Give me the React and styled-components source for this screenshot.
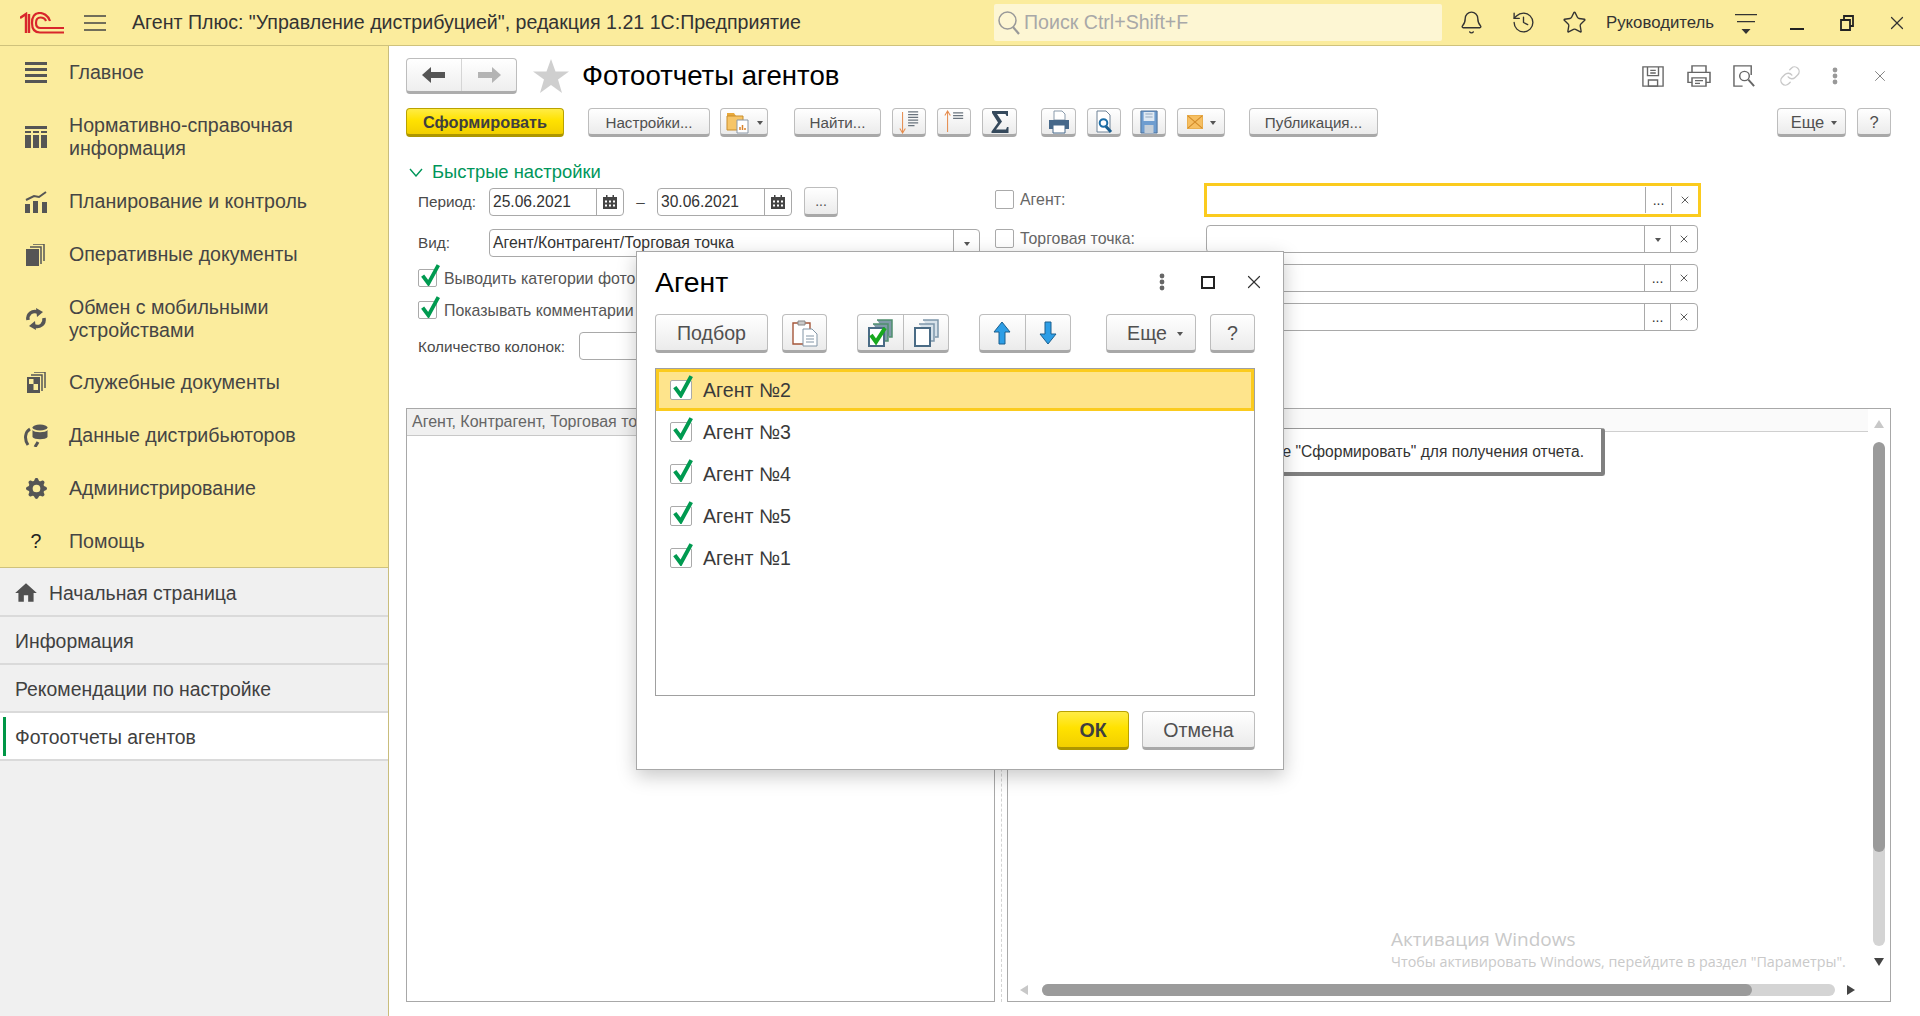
import React from "react";
import styled, { createGlobalStyle } from "styled-components";
import { Bell, History, Link, Star, X } from "lucide-react";
import { BsGearFill } from "react-icons/bs";
import { MdHome } from "react-icons/md";

const GlobalStyle = createGlobalStyle`
  html, body { margin: 0; padding: 0; background: #fff; }
  * { box-sizing: border-box; }
  body { font-family: "Liberation Sans", Arial, sans-serif; color: #444; }
`;

const Page = styled.div`
  position: relative;
  width: 1920px;
  height: 1016px;
  overflow: hidden;
  display: flex;
  flex-direction: column;
`;

/* top bar */
const TopBar = styled.header`
  height: 46px;
  flex: none;
  display: flex;
  align-items: center;
  background: #fbec9d;
  border-bottom: 1px solid #cfc27c;
  padding-left: 20px;
`;
const AppTitle = styled.div`
  flex: none;
  font-size: 19.6px;
  color: #333;
  margin-left: 26px;
  width: 862px;
  white-space: nowrap;
`;
const Search = styled.div`
  flex: none;
  width: 448px;
  height: 37px;
  background: #fdf6d3;
  border-radius: 2px;
  display: flex;
  align-items: center;
  padding-left: 3px;
  gap: 3px;
  font-size: 19.6px;
  color: #a8a8a8;
`;
const TopIcons = styled.div`
  display: flex;
  align-items: center;
  flex: none;
  color: #333;
`;
const TopSlot = styled.div`
  flex: none;
  width: ${(p) => p.$w}px;
  display: flex;
  justify-content: center;
  align-items: center;
`;
const RoleName = styled.div`
  flex: none;
  font-size: 16.8px;
  color: #333;
  width: 112px;
  margin-left: 4px;
  margin-right: 8px;
  white-space: nowrap;
`;

/* sidebar */
const Body = styled.div`
  flex: 1;
  display: flex;
  min-height: 0;
`;
const Sidebar = styled.aside`
  width: 389px;
  flex: none;
  display: flex;
  flex-direction: column;
  background: #f0f0f0;
  border-right: 1px solid #c9bd7c;
`;
const Sections = styled.nav`
  height: 522px;
  flex: none;
  background: #fbec9d;
  border-bottom: 1px solid #cfc27c;
`;
const SectionItem = styled.div`
  display: flex;
  align-items: center;
  height: ${(p) => p.$h}px;
  font-size: 19.6px;
  line-height: 23px;
  color: #454545;
`;
const SectionIcon = styled.div`
  width: 69px;
  flex: none;
  display: flex;
  justify-content: center;
  padding-left: 3px;
  color: #555;
`;
const HelpMark = styled.span`
  color: #222;
  font-size: 19.6px;
`;
const OpenTabs = styled.div`
  padding-top: 1px;
`;
const OpenTab = styled.div`
  position: relative;
  height: 48px;
  flex: none;
  display: flex;
  align-items: center;
  gap: 10px;
  padding: 2px 0 0 15px;
  font-size: 19.4px;
  color: #404040;
  background: ${(p) => (p.$active ? "#fff" : "transparent")};
  border-bottom: 2px solid #dadada;
`;
const ActiveMark = styled.span`
  position: absolute;
  left: 3px;
  top: 4px;
  bottom: 3px;
  width: 3px;
  background: #009646;
`;

/* main */
const Main = styled.main`
  flex: 1;
  min-width: 0;
  display: flex;
  flex-direction: column;
  padding: 12px 29px 14px 17px;
  background: #fff;
`;
const TitleRow = styled.div`
  height: 36px;
  flex: none;
  display: flex;
  align-items: center;
`;
const NavGroup = styled.div`
  width: 111px;
  height: 36px;
  display: flex;
  border: 1px solid #bdbdbd;
  border-bottom: 3px solid #adadad;
  border-radius: 4px;
  background: linear-gradient(#fff, #eee);
`;
const NavSeg = styled.div`
  flex: 1;
  display: flex;
  align-items: center;
  justify-content: center;
  & + & { border-left: 1px solid #d5d5d5; }
`;
const PageTitle = styled.h1`
  margin: 0 0 0 13px;
  font-size: 27.6px;
  font-weight: 400;
  color: #000;
  white-space: nowrap;
`;
const WinActions = styled.div`
  margin-left: auto;
  display: flex;
  align-items: center;
  margin-right: -12px;
`;
const WinSlot = styled.div`
  width: 45.4px;
  display: flex;
  justify-content: center;
`;

const Toolbar = styled.div`
  display: flex;
  height: ${(p) => p.$h || 29}px;
  margin-top: ${(p) => p.$mt || 0}px;
  flex: none;
`;
const Button = styled.button`
  width: ${(p) => p.$w}px;
  height: 100%;
  margin-left: ${(p) => p.$ml || 0}px;
  flex: none;
  display: flex;
  align-items: center;
  justify-content: center;
  gap: ${(p) => p.$gap || 0}px;
  padding: 1px 0 0 ${(p) => p.$pl || 0}px;
  font-family: inherit;
  font-size: ${(p) => p.$fs || 15.2}px;
  color: #505050;
  background: linear-gradient(#fff, #ebebeb);
  border: 1px solid #bdbdbd;
  border-bottom: 3px solid #a8a8a8;
  border-radius: 4px;
`;
const PrimaryButton = styled(Button)`
  color: #3f3f3f;
  font-weight: 700;
  background: linear-gradient(#ffec45, #ffe200 45%, #f2cf00);
  border: 1px solid #b9a200;
  border-bottom: 3px solid #ad9600;
`;
const SegButton = styled.div`
  width: ${(p) => p.$w}px;
  height: 100%;
  margin-left: ${(p) => p.$ml || 0}px;
  display: flex;
  background: linear-gradient(#fff, #ebebeb);
  border: 1px solid #bdbdbd;
  border-bottom: 3px solid #a8a8a8;
  border-radius: 4px;
`;
const Caret = styled.span`
  width: 0;
  height: 0;
  border-left: 3px solid transparent;
  border-right: 3px solid transparent;
  border-top: 4px solid #555;
  margin-top: ${(p) => p.$mt || 2}px;
`;
const Spacer = styled.div`
  margin-left: auto;
`;

/* quick settings */
const Quick = styled.section`
  display: flex;
  margin-top: 23px;
  flex: none;
`;
const QuickLeft = styled.div`
  width: 589px;
  flex: none;
`;
const QuickRight = styled.div`
  padding-top: 20px;
`;
const QuickHead = styled.div`
  height: 24px;
  display: flex;
  align-items: center;
  gap: 9px;
  padding-left: 3px;
  font-size: 18.4px;
  color: #00965a;
`;
const FormRow = styled.div`
  display: flex;
  align-items: center;
  height: ${(p) => p.$h}px;
  margin-top: ${(p) => p.$mt}px;
  padding-left: 12px;
  font-size: 15.3px;
  color: #4a4a4a;
`;
const RowLabel = styled.label`
  width: ${(p) => p.$w}px;
  flex: none;
  padding-top: ${(p) => p.$pt || 0}px;
  white-space: nowrap;
`;
const Field = styled.div`
  width: ${(p) => p.$w}px;
  height: 100%;
  flex: none;
  display: flex;
  align-items: center;
  border: 1px solid #a9a9a9;
  border-radius: 4px;
  background: #fff;
  font-size: ${(p) => p.$fs || 15.8}px;
  color: #333;
`;
const FieldText = styled.div`
  flex: 1;
  padding-left: 3px;
  white-space: nowrap;
  overflow: hidden;
`;
const FieldBtn = styled.div`
  width: ${(p) => p.$w}px;
  height: 100%;
  flex: none;
  display: flex;
  align-items: center;
  justify-content: center;
  border-left: 1px solid #a9a9a9;
  color: #333;
  font-size: 14px;
`;
const Dash = styled.span`
  width: 33px;
  text-align: center;
  color: #444;
`;
const MoreBtn = styled(Button)`
  height: 30px;
  margin-top: -1px;
  font-size: 14px;
`;
const CheckLabel = styled.span`
  margin: 1px 0 0 ${(p) => (p.$muted ? 6 : 7)}px;
  font-size: 15.9px;
  color: ${(p) => (p.$muted ? "#666" : "#555")};
  white-space: nowrap;
`;
const Box = styled.span`
  position: relative;
  display: block;
  flex: none;
  width: ${(p) => p.$w || 19}px;
  height: ${(p) => p.$h || 19}px;
  background: #fff;
  border: 1px solid #aaa;
  border-radius: 2px;
`;
const Tick = styled.svg`
  position: absolute;
  left: 2px;
  top: -6px;
`;
const FilterRow = styled.div`
  display: flex;
  align-items: center;
  height: 39px;
`;
const FilterLabel = styled.div`
  width: 209px;
  flex: none;
  display: flex;
  align-items: center;
`;
const FilterField = styled.div`
  margin-left: ${(p) => (p.$focus ? 0 : 2)}px;
  width: ${(p) => (p.$focus ? 497 : 492)}px;
  height: ${(p) => (p.$focus ? 34 : 28)}px;
  display: flex;
  align-items: center;
  justify-content: flex-end;
  background: #fff;
  border: ${(p) => (p.$focus ? "3px solid #fbcb1e" : "1px solid #a9a9a9")};
  border-radius: ${(p) => (p.$focus ? 0 : 4)}px;
`;
const FilterBtn = styled.div`
  width: ${(p) => p.$w}px;
  height: ${(p) => (p.$focus ? "26px" : "100%")};
  display: flex;
  align-items: center;
  justify-content: center;
  border-left: 1px solid #a9a9a9;
  font-size: 14px;
  color: #333;
`;

/* report area */
const Panels = styled.div`
  flex: 1;
  min-height: 0;
  display: flex;
  margin-top: 48px;
`;
const LeftPanel = styled.div`
  width: 589px;
  flex: none;
  border: 1px solid #a8a8a8;
`;
const LeftHead = styled.div`
  height: 27px;
  padding-left: 5px;
  display: flex;
  align-items: center;
  background: #f0f0f0;
  border-bottom: 1px solid #c8c8c8;
  font-size: 16px;
  color: #666;
  white-space: nowrap;
`;
const Splitter = styled.div`
  width: 12px;
  flex: none;
  display: flex;
  justify-content: center;
  &::before {
    content: "";
    border-left: 1px dashed #d4d4d4;
  }
`;
const RightPanel = styled.div`
  flex: 1;
  min-width: 0;
  display: flex;
  flex-direction: column;
  border: 1px solid #a8a8a8;
`;
const RightUpper = styled.div`
  flex: 1;
  min-height: 0;
  display: flex;
`;
const ReportArea = styled.div`
  flex: 1;
  position: relative;
`;
const ReportHead = styled.div`
  height: 23px;
  background: #fafafa;
  border-bottom: 1px solid #cfcfcf;
`;
const Hint = styled.div`
  position: absolute;
  left: 230px;
  top: 19px;
  width: 367px;
  height: 48px;
  display: flex;
  align-items: center;
  justify-content: flex-end;
  padding: 2px 17px 0 0;
  white-space: nowrap;
  font-size: 15.6px;
  color: #333;
  background: #fff;
  border: 1px solid #999;
  border-bottom: 4px solid #808080;
  border-right: 4px solid #808080;
  border-radius: 3px;
`;
const VBar = styled.div`
  width: 22px;
  flex: none;
  display: flex;
  flex-direction: column;
  align-items: center;
`;
const VTrack = styled.div`
  width: 12px;
  height: 504px;
  margin: 14px 0 12px;
  border-radius: 6px;
  background: #d4d4d4;
  overflow: hidden;
`;
const VThumb = styled.div`
  height: 410px;
  border-radius: 6px;
  background: #9b9b9b;
`;
const HBar = styled.div`
  height: 12px;
  flex: none;
  margin-bottom: 5px;
  display: flex;
  align-items: center;
  padding-left: 12px;
`;
const HTrack = styled.div`
  width: 793px;
  height: 12px;
  margin: 0 12px 0 14px;
  border-radius: 6px;
  background: #d4d4d4;
`;
const HThumb = styled.div`
  width: 710px;
  height: 12px;
  border-radius: 6px;
  background: #9b9b9b;
`;
const Activation = styled.div`
  position: absolute;
  left: 1391px;
  top: 926px;
  font-family: "Open Sans", sans-serif;
  color: #c9c9c9;
  pointer-events: none;
`;
const ActivationTitle = styled.div`
  font-size: 19px;
  line-height: 26px;
`;
const ActivationText = styled.div`
  font-size: 14.3px;
  line-height: 20px;
  white-space: nowrap;
`;

/* dialog */
const Dialog = styled.div`
  position: absolute;
  left: 636px;
  top: 251px;
  width: 648px;
  height: 519px;
  padding: 0 28px 0 18px;
  background: #fff;
  border: 1px solid #a8a8a8;
  box-shadow: 0 6px 18px rgba(0, 0, 0, 0.22);
`;
const DialogHead = styled.div`
  height: 62px;
  display: flex;
  align-items: center;
  padding-bottom: 2px;
  margin-right: -22px;
`;
const DialogTitle = styled.div`
  font-size: 28.4px;
  color: #000;
  flex: 1;
`;
const HeadTool = styled.div`
  width: 46px;
  display: flex;
  justify-content: center;
  color: #333;
`;
const AgentList = styled.div`
  height: 328px;
  margin-top: 15px;
  border: 1px solid #a0a0a0;
`;
const AgentRow = styled.div`
  height: 42px;
  display: flex;
  align-items: center;
  padding-left: ${(p) => (p.$current ? 11 : 14)}px;
  gap: 11px;
  font-size: 19.6px;
  color: #3a3a3a;
  background: ${(p) => (p.$current ? "#fee48c" : "#fff")};
  border: ${(p) => (p.$current ? "3px solid #fbcb1e" : "none")};
`;
const DialogFoot = styled.div`
  display: flex;
  justify-content: flex-end;
  gap: 13px;
  height: 39px;
  margin-top: 15px;
`;

/* icons */
const Logo = () => (
  <svg width="44" height="22" viewBox="0 0 44 22" fill="none" stroke="#d8262c" strokeWidth="2.2" style={{ flex: "none" }}>
    <path d="M0 6 L6 2 V21 M9 2 V21" strokeWidth="2.4" />
    <path d="M30 9 C28 3 23 1 20 1 C14 1 12 5 12 11 C12 17 15 20.500 20 20.500 H44" />
    <path d="M26 9 C25 6.500 23 5.500 20.500 5.500 C17 5.500 16 8 16 11 C16 14 17.500 16 20.500 16 H44" />
  </svg>
);
const Burger = () => (
  <svg width="22" height="16" viewBox="0 0 22 16" stroke="#444" strokeWidth="1.4" style={{ marginLeft: 20, flex: "none" }}>
    <path d="M0 1 H22 M0 8 H22 M0 15 H22" />
  </svg>
);
const SearchGlass = () => (
  <svg width="24" height="26" viewBox="0 0 24 26" fill="none" stroke="#999" strokeWidth="1.5">
    <circle cx="10.500" cy="10.500" r="8.500" />
    <path d="M16 17 L22 24" strokeWidth="2.200" />
  </svg>
);
const MenuIco = () => (
  <svg width="22" height="21" viewBox="0 0 22 21" fill="#555">
    <path d="M0 0 H22 V3 H0Z M0 6 H22 V9 H0Z M0 12 H22 V15 H0Z M0 18 H22 V21 H0Z" />
  </svg>
);
const TableIco = () => (
  <svg width="22" height="22" viewBox="0 0 22 22" fill="#555">
    <path d="M0 0 H22 V3 H0Z M0 5 H6 V7 H0Z M8 5 H14 V7 H8Z M16 5 H22 V7 H16Z M0 9 H6 V22 H0Z M8 9 H14 V22 H8Z M16 9 H22 V22 H16Z" />
  </svg>
);
const ChartIco = () => (
  <svg width="22" height="22" viewBox="0 0 22 22" fill="#555">
    <path d="M0 13 H5 V22 H0Z M8 10 H13 V22 H8Z M17 11 H22 V22 H17Z" />
    <path d="M1 9 L9 5 L14 6 L21 1" fill="none" stroke="#555" strokeWidth="2" />
  </svg>
);
const DocsIco = () => (
  <svg width="20" height="22" viewBox="0 0 20 22" fill="#555">
    <path d="M0 5 H13 V22 H0Z" />
    <path d="M15 20 V3 H4 M18 17 V0 H7" fill="none" stroke="#555" strokeWidth="1.500" />
  </svg>
);
const SyncIco = () => (
  <svg width="22" height="22" viewBox="0 0 22 22" fill="none" stroke="#555" strokeWidth="3.500">
    <path d="M3 12 C2 6 7 2 13 4" />
    <path d="M19 10 C20 16 15 20 9 18" />
    <path d="M11 0 L18 4 L12 9Z M11 22 L4 18 L10 13Z" fill="#555" stroke="none" />
  </svg>
);
const ServiceIco = () => (
  <svg width="19" height="21" viewBox="0 0 19 21" fill="#555">
    <path d="M0 5 H13 V21 H0Z" />
    <path d="M2 7 H6.500 V12 H2Z M6.500 12 H11 V18 H6.500Z" fill="#fbec9d" />
    <path d="M15 19 V3 H4 M18 16 V0 H7" fill="none" stroke="#555" strokeWidth="1.500" />
  </svg>
);
const DataIco = () => (
  <svg width="24" height="23" viewBox="0 0 24 23" fill="none" stroke="#555" strokeWidth="3">
    <ellipse cx="16" cy="3.500" rx="7.500" ry="3" fill="#555" stroke="none" />
    <path d="M8.500 6 V13 C10 16 22 16 23.500 13 V6 C22 9 10 9 8.500 6Z" fill="#555" stroke="none" />
    <path d="M6 5 C1 8 0 15 4 21" />
    <path d="M14 18 L11 23" />
  </svg>
);
const FilterIco = () => (
  <svg width="24" height="24" viewBox="0 0 24 24" fill="#333">
    <path d="M1 3 H23 V4.300 H1Z M3 10 H21 V11.300 H3Z" />
    <path d="M7.500 18 H16.500 L12 23Z" />
  </svg>
);
const ArrowNav = ({ color, right }) => (
  <svg width="24" height="16" viewBox="0 0 24 16" fill={color} style={right ? { transform: "scaleX(-1)" } : undefined}>
    <path d="M0 8 L9 0 V5 H23 V11 H9 V16Z" />
  </svg>
);
const TitleStar = () => (
  <svg width="36" height="34" viewBox="0 0 36 34" fill="#cfcfcf" style={{ marginLeft: 16 }}>
    <path d="M18 0 L22.500 12.500 H36 L25 20.500 L29 34 L18 26 L7 34 L11 20.500 L0 12.500 H13.500Z" />
  </svg>
);
const FolderIco = () => (
  <svg width="26" height="24" viewBox="0 0 26 24">
    <path d="M1 6 V3 H8 L10 6 H17 V11 H1Z" fill="#e8a93c" />
    <path d="M1 6 H17 V20 H1Z" fill="#f6c568" stroke="#c98d2a" />
    <path d="M11 10 H22 V23 H11Z" fill="#fff" stroke="#8a97a5" />
    <path d="M14 20 V17 M16.500 20 V15 M19 20 V18" stroke="#d9822b" strokeWidth="1.500" />
  </svg>
);
const SortIco = ({ up }) => (
  <svg width="22" height="24" viewBox="0 0 24 26" fill="none">
    <path d={up ? "M5 24 V2 M2 6 L5 1 L8 6" : "M5 2 V24 M2 20 L5 25 L8 20"} stroke="#e58a4a" strokeWidth="1.100" />
    <path d={up ? "M11 3 H22 M11 6 H22 M11 9 H22" : "M11 2 H22 M11 5 H22 M11 8 H22 M11 11 H22 M11 14 H22 M11 17 H18"} stroke="#6a747e" strokeWidth="1.200" />
  </svg>
);
const SigmaIco = () => (
  <svg width="18" height="22" viewBox="0 0 18 22" fill="#35495c">
    <path d="M1 0 H17 V5 H15.500 L14.500 3 H6 L11 10.500 L5 18.500 H15 L16 16 H17.500 V22 H0.500 V20.500 L7 11.500 L1 2Z" />
  </svg>
);
const PrintIco = () => (
  <svg width="22" height="24" viewBox="0 0 22 24">
    <path d="M6 1 H14 L17 4 V10 H6Z" fill="#fff" stroke="#8a9bac" />
    <path d="M1 10 H21 V19 H1Z" fill="#46688a" />
    <path d="M5 15 H17 V23 H5Z" fill="#fff" stroke="#46688a" />
  </svg>
);
const PreviewIco = () => (
  <svg width="20" height="25" viewBox="0 0 20 25" fill="none">
    <path d="M3 1 H12 L16 5 V22 H3Z" fill="#fff" stroke="#6f8296" />
    <circle cx="9.500" cy="13" r="3.800" stroke="#1b6ea8" strokeWidth="2" />
    <path d="M12 16.500 L17 22" stroke="#1b5f8f" strokeWidth="3" />
  </svg>
);
const SaveIco = () => (
  <svg width="18" height="24" viewBox="0 0 20 24" preserveAspectRatio="none">
    <path d="M1 1 H19 V23 H1Z" fill="#6e9dd0" stroke="#4c7199" />
    <path d="M4 2 H16 V11 H4Z" fill="#dfe9f3" />
    <path d="M5 15 H15 V23 H5Z" fill="#c6cfd8" />
    <path d="M6 4 H14 M6 7 H14" stroke="#90a5ba" />
  </svg>
);
const MailIco = () => (
  <svg width="16" height="14" viewBox="0 0 18 16" preserveAspectRatio="none">
    <path d="M0 0 H18 V16 H0Z" fill="#f6bf62" stroke="#dc9c36" />
    <path d="M1 1 L17 15 M17 1 L1 15" stroke="#d28b2a" strokeWidth="1.200" />
  </svg>
);
const OutlineDisk = () => (
  <svg width="22" height="21" viewBox="0 0 24 24" preserveAspectRatio="none" fill="none" stroke="#666" strokeWidth="1.500">
    <path d="M1 1 H23 V23 H1Z" />
    <path d="M6 1 V11 H18 V1 M7 16 H17 V23 H7Z M9 5 H15 M9 8 H15" />
  </svg>
);
const OutlinePrint = () => (
  <svg width="24" height="22" viewBox="0 0 24 24" preserveAspectRatio="none" fill="none" stroke="#666" strokeWidth="1.500">
    <path d="M5 8 V1 H19 V8 M5 19 H1 V8 H23 V19 H19" />
    <path d="M5 14 H19 V23 H5Z M8 17 H16 M8 20 H13" />
  </svg>
);
const OutlinePreview = () => (
  <svg width="23" height="22" viewBox="0 0 24 24" preserveAspectRatio="none" fill="none" stroke="#666" strokeWidth="1.500">
    <path d="M14 1 H1 V23 H10 M19 11 V1 H14" />
    <circle cx="12" cy="12" r="5" />
    <path d="M16 16 L22 23" strokeWidth="2" />
  </svg>
);
const Dots = ({ color }) => (
  <svg width="6" height="18" viewBox="0 0 6 18" fill={color}>
    <circle cx="3" cy="3" r="2.400" />
    <circle cx="3" cy="9" r="2.400" />
    <circle cx="3" cy="15" r="2.400" />
  </svg>
);
const CalIco = () => (
  <svg width="14" height="14" viewBox="0 0 14 14" fill="#444">
    <path d="M0 2 H3 V0 H4.500 V2 H9.500 V0 H11 V2 H14 V14 H0Z" />
    <path d="M2 5.500 H4 V7.500 H2Z M6 5.500 H8 V7.500 H6Z M10 5.500 H12 V7.500 H10Z M2 9.500 H4 V11.500 H2Z M6 9.500 H8 V11.500 H6Z M10 9.500 H12 V11.500 H10Z" fill="#fff" />
  </svg>
);
const GreenTick = ({ size = 19 }) => (
  <Tick width={size} height={size + 3} viewBox="0 0 18 21" fill="none">
    <path d="M1.500 11 L7 18.500 L16.500 1" stroke="#009a50" strokeWidth="3.600" />
  </Tick>
);
const ClipIco = () => (
  <svg width="26" height="27" viewBox="0 0 26 27">
    <path d="M1 3 H18 V24 H1Z" fill="#fff" stroke="#a5573a" strokeWidth="1.400" />
    <path d="M6 1 H13 V5 H6Z" fill="#c9c9c9" stroke="#888" />
    <path d="M11 9 H20 L25 14 V26 H11Z" fill="#fff" stroke="#8295a6" />
    <path d="M14 16 H22 M14 19 H22 M14 22 H22" stroke="#8295a6" />
  </svg>
);
const StackIco = ({ checked }) => (
  <svg width="26" height="28" viewBox="0 0 26 28" fill="none">
    <path d="M10 1 H25 V18 H22 M6 5 H21 V22 H18" fill={checked ? "#7f9aa8" : "#d7e2ea"} stroke={checked ? "#4f8f6e" : "#7d96ab"} strokeWidth="1.500" />
    <path d="M2 9 H17 V27 H2Z" fill="#fff" stroke="#4a6b85" strokeWidth="2" />
    {checked && <path d="M4 16 L9 23 L18 9" stroke="#17a81e" strokeWidth="4" />}
  </svg>
);
const BlueArrow = ({ down }) => (
  <svg width="18" height="24" viewBox="0 0 18 24" style={down ? { transform: "scaleY(-1)" } : undefined}>
    <path d="M9 1 L17 11 H12 V23 H6 V11 H1Z" fill="#2d9ee6" stroke="#1a5f8e" />
  </svg>
);

const SectionList = [
  { h: 53, icon: <MenuIco />, text: "Главное" },
  { h: 76, icon: <TableIco />, text: <>Нормативно-справочная<br />информация</> },
  { h: 53, icon: <ChartIco />, text: "Планирование и контроль" },
  { h: 53, icon: <DocsIco />, text: "Оперативные документы" },
  { h: 75, icon: <SyncIco />, text: <>Обмен с мобильными<br />устройствами</> },
  { h: 53, icon: <ServiceIco />, text: "Служебные документы" },
  { h: 53, icon: <DataIco />, text: "Данные дистрибьюторов" },
  { h: 53, icon: <BsGearFill size={21} color="#555" />, text: "Администрирование" },
  { h: 53, icon: <HelpMark>?</HelpMark>, text: "Помощь" },
];
const Agents = ["Агент №2", "Агент №3", "Агент №4", "Агент №5", "Агент №1"];

const SplitSeg = styled(NavSeg)`
  & + & { border-left: 1px solid #bdbdbd; }
`;

export default function App() {
  return (
    <Page>
      <GlobalStyle />
      <TopBar>
        <Logo />
        <Burger />
        <AppTitle>Агент Плюс: "Управление дистрибуцией", редакция 1.21 1С:Предприятие</AppTitle>
        <Search><SearchGlass />Поиск Ctrl+Shift+F</Search>
        <TopIcons>
          <TopSlot $w={58}><Bell size={25} strokeWidth={1.3} /></TopSlot>
          <TopSlot $w={46}><History size={25} strokeWidth={1.3} /></TopSlot>
          <TopSlot $w={56}><Star size={25} strokeWidth={1.3} /></TopSlot>
          <RoleName>Руководитель</RoleName>
          <TopSlot $w={40}><FilterIco /></TopSlot>
          <TopSlot $w={62}><svg width="16" height="16" viewBox="0 0 16 16"><path d="M1 14 H15" stroke="#222" strokeWidth="2" /></svg></TopSlot>
          <TopSlot $w={38}><svg width="16" height="16" viewBox="0 0 16 16" fill="none" stroke="#222" strokeWidth="1.800"><path d="M2 5 H11 V15 H2Z M5 4 V1 H14 V11 H11" /></svg></TopSlot>
          <TopSlot $w={62}><X size={22} strokeWidth={1.3} /></TopSlot>
        </TopIcons>
      </TopBar>
      <Body>
        <Sidebar>
          <Sections>
            {SectionList.map((s, i) => (
              <SectionItem key={i} $h={s.h}>
                <SectionIcon>{s.icon}</SectionIcon>
                <div>{s.text}</div>
              </SectionItem>
            ))}
          </Sections>
          <OpenTabs>
            <OpenTab><MdHome size={26} color="#505050" style={{ marginLeft: -2 }} />Начальная страница</OpenTab>
            <OpenTab>Информация</OpenTab>
            <OpenTab>Рекомендации по настройке</OpenTab>
            <OpenTab $active><ActiveMark />Фотоотчеты агентов</OpenTab>
          </OpenTabs>
        </Sidebar>
        <Main>
          <TitleRow>
            <NavGroup>
              <NavSeg><ArrowNav color="#555" /></NavSeg>
              <NavSeg><ArrowNav color="#b4b4b4" right /></NavSeg>
            </NavGroup>
            <TitleStar />
            <PageTitle>Фотоотчеты агентов</PageTitle>
            <WinActions>
              <WinSlot><OutlineDisk /></WinSlot>
              <WinSlot><OutlinePrint /></WinSlot>
              <WinSlot><OutlinePreview /></WinSlot>
              <WinSlot><Link size={22} strokeWidth={1.5} color="#c8c8c8" /></WinSlot>
              <WinSlot><Dots color="#999" /></WinSlot>
              <WinSlot><X size={18} strokeWidth={1.2} color="#777" /></WinSlot>
            </WinActions>
          </TitleRow>
          <Toolbar $mt={14}>
            <PrimaryButton $w={158} $fs={16.3}>Сформировать</PrimaryButton>
            <Button $w={122} $ml={24}>Настройки...</Button>
            <Button $w={48} $ml={10} $gap={5}><FolderIco /><Caret /></Button>
            <Button $w={87} $ml={26}>Найти...</Button>
            <Button $w={34} $ml={11}><SortIco /></Button>
            <Button $w={34} $ml={11}><SortIco up /></Button>
            <Button $w={35} $ml={11}><SigmaIco /></Button>
            <Button $w={35} $ml={24}><PrintIco /></Button>
            <Button $w={34} $ml={11}><PreviewIco /></Button>
            <Button $w={34} $ml={11}><SaveIco /></Button>
            <Button $w={48} $ml={11} $gap={7}><MailIco /><Caret /></Button>
            <Button $w={129} $ml={24}>Публикация...</Button>
            <Spacer />
            <Button $w={69} $gap={7} $fs={16.5} $pl={5}>Еще<Caret /></Button>
            <Button $w={34} $ml={11} $fs={16.5}>?</Button>
          </Toolbar>
          <Quick>
            <QuickLeft>
              <QuickHead>
                <svg width="14" height="9" viewBox="0 0 14 9" fill="none" stroke="#00965a" strokeWidth="1.400"><path d="M1 1 L7 8 L13 1" /></svg>
                Быстрые настройки
              </QuickHead>
              <FormRow $h={28} $mt={4}>
                <RowLabel $w={71}>Период:</RowLabel>
                <Field $w={135} $fs={15.6}><FieldText>25.06.2021</FieldText><FieldBtn $w={27}><CalIco /></FieldBtn></Field>
                <Dash>–</Dash>
                <Field $w={135} $fs={15.6}><FieldText>30.06.2021</FieldText><FieldBtn $w={27}><CalIco /></FieldBtn></Field>
                <MoreBtn $w={34} $ml={12}>...</MoreBtn>
              </FormRow>
              <FormRow $h={28} $mt={13}>
                <RowLabel $w={71}>Вид:</RowLabel>
                <Field $w={491}><FieldText>Агент/Контрагент/Торговая точка</FieldText><FieldBtn $w={26}><Caret /></FieldBtn></Field>
              </FormRow>
              <FormRow $h={18} $mt={12}>
                <Box $w={19} $h={18}><GreenTick /></Box>
                <CheckLabel>Выводить категории фотографий</CheckLabel>
              </FormRow>
              <FormRow $h={18} $mt={14}>
                <Box $w={19} $h={18}><GreenTick /></Box>
                <CheckLabel>Показывать комментарии</CheckLabel>
              </FormRow>
              <FormRow $h={28} $mt={13}>
                <RowLabel $w={161} $pt={1}>Количество колонок:</RowLabel>
                <Field $w={80} />
              </FormRow>
            </QuickLeft>
            <QuickRight>
              <FilterRow>
                <FilterLabel><Box $w={19} $h={19} /><CheckLabel $muted>Агент:</CheckLabel></FilterLabel>
                <FilterField $focus>
                  <FilterBtn $w={26} $focus>...</FilterBtn>
                  <FilterBtn $w={27} $focus><X size={12} strokeWidth={1.6} /></FilterBtn>
                </FilterField>
              </FilterRow>
              <FilterRow>
                <FilterLabel><Box $w={19} $h={19} /><CheckLabel $muted>Торговая точка:</CheckLabel></FilterLabel>
                <FilterField>
                  <FilterBtn $w={26}><Caret /></FilterBtn>
                  <FilterBtn $w={27}><X size={12} strokeWidth={1.6} /></FilterBtn>
                </FilterField>
              </FilterRow>
              <FilterRow>
                <FilterLabel />
                <FilterField>
                  <FilterBtn $w={26}>...</FilterBtn>
                  <FilterBtn $w={27}><X size={12} strokeWidth={1.6} /></FilterBtn>
                </FilterField>
              </FilterRow>
              <FilterRow>
                <FilterLabel />
                <FilterField>
                  <FilterBtn $w={26}>...</FilterBtn>
                  <FilterBtn $w={27}><X size={12} strokeWidth={1.6} /></FilterBtn>
                </FilterField>
              </FilterRow>
            </QuickRight>
          </Quick>
          <Panels>
            <LeftPanel>
              <LeftHead>Агент, Контрагент, Торговая точка</LeftHead>
            </LeftPanel>
            <Splitter />
            <RightPanel>
              <RightUpper>
                <ReportArea>
                  <ReportHead />
                  <Hint>Нажмите "Сформировать" для получения отчета.</Hint>
                </ReportArea>
                <VBar>
                  <svg width="10" height="8" viewBox="0 0 10 8" fill="#c8c8c8" style={{ marginTop: 11 }}><path d="M5 0 L10 8 H0Z" /></svg>
                  <VTrack><VThumb /></VTrack>
                  <svg width="10" height="8" viewBox="0 0 10 8" fill="#444"><path d="M0 0 H10 L5 8Z" /></svg>
                </VBar>
              </RightUpper>
              <HBar>
                <svg width="8" height="10" viewBox="0 0 8 10" fill="#c8c8c8"><path d="M8 0 V10 L0 5Z" /></svg>
                <HTrack><HThumb /></HTrack>
                <svg width="8" height="10" viewBox="0 0 8 10" fill="#444"><path d="M0 0 L8 5 L0 10Z" /></svg>
              </HBar>
            </RightPanel>
          </Panels>
        </Main>
      </Body>
      <Activation>
        <ActivationTitle>Активация Windows</ActivationTitle>
        <ActivationText>Чтобы активировать Windows, перейдите в раздел "Параметры".</ActivationText>
      </Activation>
      <Dialog>
        <DialogHead>
          <DialogTitle>Агент</DialogTitle>
          <HeadTool><Dots color="#666" /></HeadTool>
          <HeadTool><svg width="14" height="13" viewBox="0 0 14 13" fill="none" stroke="#222" strokeWidth="2"><path d="M1 1 H13 V12 H1Z" /></svg></HeadTool>
          <HeadTool><X size={22} strokeWidth={1.3} /></HeadTool>
        </DialogHead>
        <Toolbar $h={39}>
          <Button $w={113} $fs={19.6}>Подбор</Button>
          <Button $w={45} $ml={14}><ClipIco /></Button>
          <SegButton $w={92} $ml={30}>
            <SplitSeg><StackIco checked /></SplitSeg>
            <SplitSeg><StackIco /></SplitSeg>
          </SegButton>
          <SegButton $w={92} $ml={30}>
            <SplitSeg><BlueArrow /></SplitSeg>
            <SplitSeg><BlueArrow down /></SplitSeg>
          </SegButton>
          <Button $w={90} $ml={35} $fs={19.6} $gap={10} $pl={8}>Еще<Caret /></Button>
          <Button $w={45} $ml={14} $fs={19.6}>?</Button>
        </Toolbar>
        <AgentList>
          {Agents.map((a, i) => (
            <AgentRow key={a} $current={i === 0}>
              <Box $w={22} $h={20}><GreenTick size={20} /></Box>
              {a}
            </AgentRow>
          ))}
        </AgentList>
        <DialogFoot>
          <PrimaryButton $w={72} $fs={19.6}>ОК</PrimaryButton>
          <Button $w={113} $fs={19.6}>Отмена</Button>
        </DialogFoot>
      </Dialog>
    </Page>
  );
}
